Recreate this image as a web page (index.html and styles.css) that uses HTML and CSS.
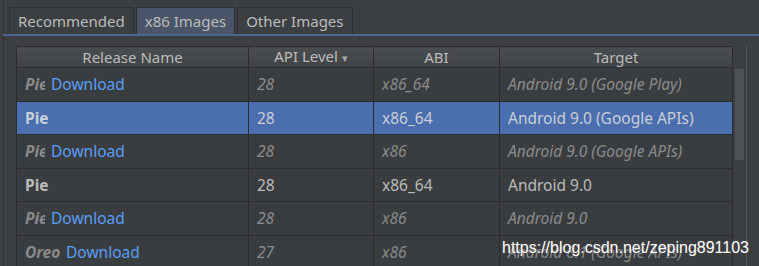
FILE: index.html
```html
<!DOCTYPE html>
<html lang="en">
<head>
  <meta charset="UTF-8" />
  <title>System Image</title>
  <link rel="stylesheet" href="styles.css">
</head>
<body>

  <!-- Tabs -->
  <div class="tabs">
    <div class="tab">Recommended</div>
    <div class="tab active">x86 Images</div>
    <div class="tab">Other Images</div>
  </div>
  <div class="tab-line"></div>

  <!-- Image list -->
  <div class="panel">
    <div class="list">
      <table class="images">
        <colgroup>
          <col class="c-name"><col class="c-api"><col class="c-abi"><col class="c-target">
        </colgroup>
        <thead>
          <tr>
            <th>Release Name</th>
            <th>API Level <span class="sort">&#9662;</span></th>
            <th>ABI</th>
            <th>Target</th>
          </tr>
        </thead>
        <tbody>
          <tr class="missing">
            <td><b>Pie</b> <a>Download</a></td><td>28</td><td>x86_64</td><td>Android 9.0 (Google Play)</td>
          </tr>
          <tr class="selected">
            <td><b>Pie</b></td><td>28</td><td>x86_64</td><td>Android 9.0 (Google APIs)</td>
          </tr>
          <tr class="missing">
            <td><b>Pie</b> <a>Download</a></td><td>28</td><td>x86</td><td>Android 9.0 (Google APIs)</td>
          </tr>
          <tr>
            <td><b>Pie</b></td><td>28</td><td>x86_64</td><td>Android 9.0</td>
          </tr>
          <tr class="missing">
            <td><b>Pie</b> <a>Download</a></td><td>28</td><td>x86</td><td>Android 9.0</td>
          </tr>
          <tr class="missing">
            <td><b class="wide">Oreo</b> <a>Download</a></td><td>27</td><td>x86</td><td>Android 8.1 (Google APIs)</td>
          </tr>
        </tbody>
      </table>
      <div class="scrollbar"><div class="thumb"></div></div>
    </div>
  </div>

  <div class="watermark">https://blog.csdn.net/zeping891103</div>

</body>
</html>
```

FILE: styles.css
```css
html, body {
  margin: 0;
  padding: 0;
  height: 100%;
  overflow: hidden;
}

body {
  background: #3c3f41;
  font-family: "Noto Sans", "Open Sans", sans-serif;
  font-size: 15.5px;
  color: #bbbbbb;
  position: relative;
}

.tabs {
  display: flex;
  gap: 2px;
  padding: 7px 0 0 5px;
  height: 27px;
  border-left: 1px solid #2f3133;
  margin-left: 3px;
}

.tab {
  padding: 0 8px;
  line-height: 26px;
  border: 1px solid #2d2f31;
  border-bottom: none;
  background: #3c3f41;
  color: #bbbbbb;
  font-size: 15px;
}

.tab.active {
  background: #4a5569;
}

.tab-line {
  height: 2px;
  margin-left: 3px;
  background: #4b6491;
}

.panel {
  margin-left: 3px;
  border-left: 1px solid #2f3133;
  padding: 10px 0 0 12px;
}

.list {
  display: flex;
}

.images {
  width: 716px;
  border-collapse: collapse;
  table-layout: fixed;
  border: 1px solid #2b2d2f;
}

.c-name { width: 232px; }
.c-api { width: 125px; }
.c-abi { width: 126px; }
.c-target { width: 233px; }

th {
  height: 20px;
  font-weight: normal;
  font-size: 15px;
  background: linear-gradient(#4a4d4f, #414446);
  border: 1px solid #2b2d2f;
  border-top: none;
  color: #bbbbbb;
  line-height: 19px;
  padding: 0;
}

.sort {
  font-size: 11px;
  color: #a9a9a9;
}

td {
  height: 32.5px;
  padding: 0 0 0 8px;
  border: 1px solid #2b2d2f;
  background: #3a3d3f;
  white-space: nowrap;
  overflow: hidden;
  line-height: 20px;
}

td b {
  font-weight: bold;
}

tr.selected td {
  background: #4b6eaf;
  color: #c8cfd8;
}

tr.missing td {
  color: #8a8a8a;
  font-style: italic;
}

tr.missing td b {
  display: inline-block;
  width: 20px;
  margin-right: 2px;
  overflow: hidden;
  vertical-align: bottom;
}

tr.missing td b.wide {
  width: 35px;
}

tr.missing td a {
  color: #589df6;
  font-style: normal;
}

.scrollbar {
  width: 14px;
  border-right: 1px solid #525557;
  background: #3c3f41;
  padding-top: 23px;
  box-sizing: border-box;
  display: flex;
  justify-content: center;
}

.thumb {
  width: 9px;
  height: 91px;
  background: #4e5254;
}

.watermark {
  position: absolute;
  left: 502px;
  top: 239px;
  font-family: "Liberation Sans", Arial, sans-serif;
  font-size: 16px;
  color: #ffffff;
  text-shadow: 0 0 2px #555;
}
```
